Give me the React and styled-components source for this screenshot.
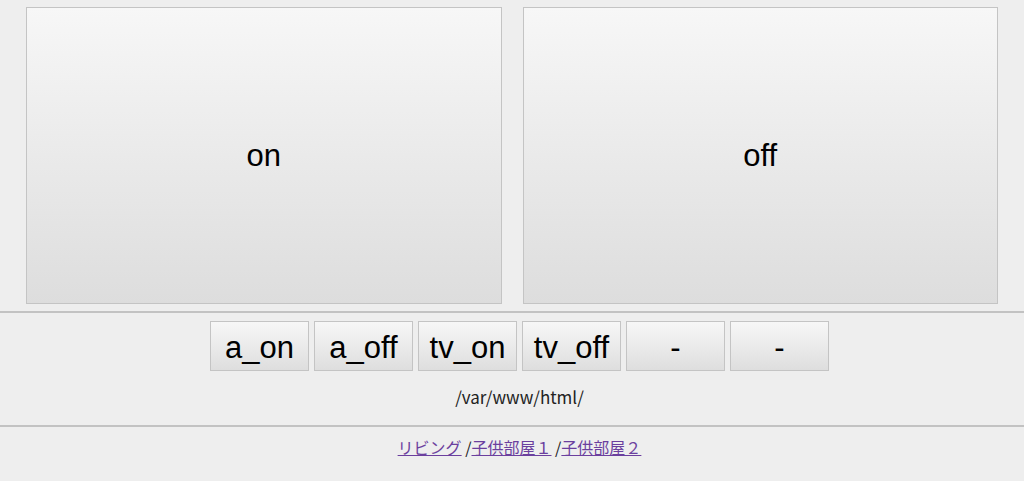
import React from 'react';
import styled, { createGlobalStyle } from 'styled-components';

const GlobalStyle = createGlobalStyle`
  html, body {
    margin: 0;
    padding: 0;
    background: #eeeeee;
  }
`;

const Page = styled.div`
  width: 1024px;
  height: 481px;
  overflow: hidden;
  background: #eeeeee;
  font-family: "Liberation Sans", Arial, sans-serif;
`;

const MainRow = styled.div`
  display: flex;
  gap: 21px;
  padding: 7px 26px 0 26px;
`;

const BigButton = styled.button`
  flex: 1;
  height: 297px;
  border: 1px solid #c4c4c4;
  border-radius: 0;
  background: linear-gradient(to bottom, #f7f7f7, #dddddd);
  font-family: "Liberation Sans", Arial, sans-serif;
  font-size: 31px;
  color: #000;
  padding: 0;
`;

const Rule = styled.hr`
  margin: ${p => p.$top}px 0 0 0;
  border: 0;
  border-top: 2px solid #c2c2c2;
  height: 0;
`;

const Section = styled.div`
  padding-left: 15px;
`;

const SmallRow = styled.div`
  display: flex;
  justify-content: center;
  gap: 5px;
  margin-top: 8px;
`;

const SmallButton = styled.button`
  width: 99px;
  height: 50px;
  border: 1px solid #c4c4c4;
  border-radius: 0;
  background: linear-gradient(to bottom, #f7f7f7, #dedede);
  font-family: "Liberation Sans", Arial, sans-serif;
  font-size: 31px;
  color: #000;
  padding: 3px 0 0 0;
`;

const Path = styled.div`
  text-align: center;
  margin-top: 15px;
  font-family: "Noto Sans CJK JP", "Noto Sans", sans-serif;
  font-size: 17px;
  color: #222;
  line-height: 22px;
`;

const Links = styled.div`
  text-align: center;
  margin-top: 9px;
  font-family: "Noto Sans CJK JP", "Noto Sans", sans-serif;
  font-size: 16px;
  line-height: 22px;
  color: #222;
`;

const Link = styled.a`
  color: #6b3f9e;
  text-decoration: underline;
`;

const smallLabels = ['a_on', 'a_off', 'tv_on', 'tv_off', '-', '-'];

const App = () => {
  return (
    <Page>
      <GlobalStyle />
      <MainRow>
        <BigButton>on</BigButton>
        <BigButton>off</BigButton>
      </MainRow>
      <Rule $top={7} />
      <Section>
        <SmallRow>
          {smallLabels.map((label, i) => (
            <SmallButton key={i}>{label}</SmallButton>
          ))}
        </SmallRow>
        <Path>/var/www/html/</Path>
      </Section>
      <Rule $top={17} />
      <Section>
        <Links>
          <Link href="#">リビング</Link> /<Link href="#">子供部屋１</Link> /<Link href="#">子供部屋２</Link>
        </Links>
      </Section>
    </Page>
  );
};

export default App;
